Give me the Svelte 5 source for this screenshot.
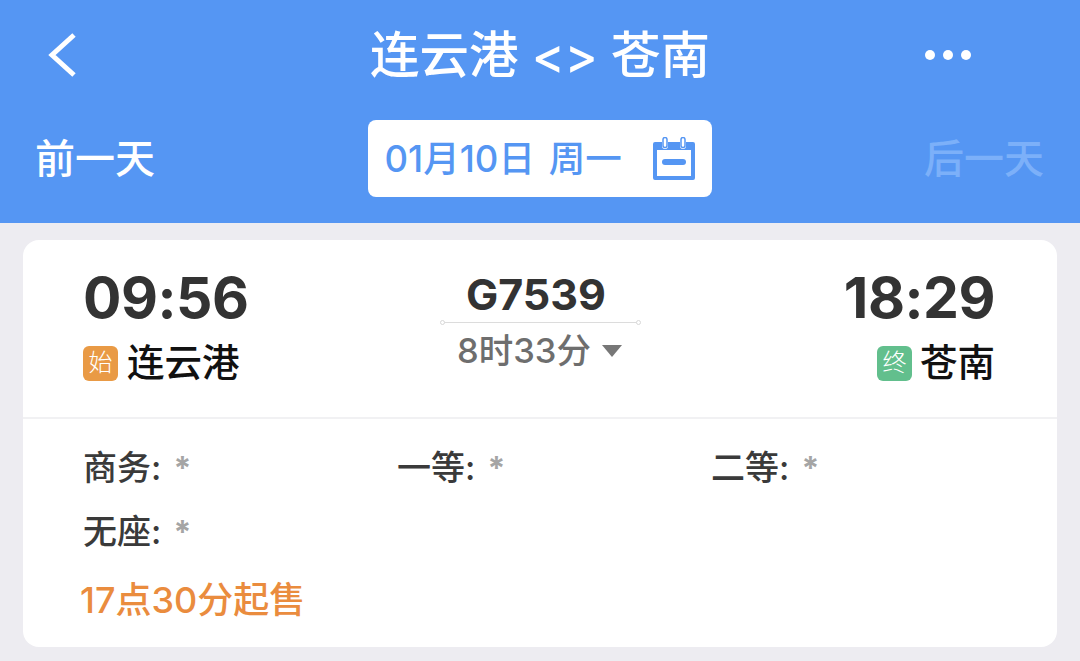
<script>
	const seats = [
		{ label: '商务', value: '*' },
		{ label: '一等', value: '*' },
		{ label: '二等', value: '*' },
		{ label: '无座', value: '*' }
	];
</script>

<div class="page">
	<header class="header">
		<div class="title-row">
			<svg class="back" width="32" height="44" viewBox="0 0 32 44" aria-hidden="true">
				<path d="M26 2 L4 22 L26 42" fill="none" stroke="#fff" stroke-width="5" />
			</svg>
			<h1 class="title">连云港 &lt;&gt; 苍南</h1>
			<div class="dots"><i></i><i></i><i></i></div>
		</div>
		<div class="date-row">
			<span class="day-link">前一天</span>
			<div class="date-pill">
				<span class="date-text">01月10日 周一</span>
				<svg width="44" height="44" viewBox="0 0 44 44" aria-hidden="true">
					<path d="M3 5 H10 V9 a3 3 0 0 0 6 0 V5 H28 V9 a3 3 0 0 0 6 0 V5 H41 a2 2 0 0 1 2 2 V41 a2 2 0 0 1 -2 2 H3 a2 2 0 0 1 -2 -2 V7 a2 2 0 0 1 2 -2 Z M5 13 V39 H39 V13 Z" fill="#5596f3" fill-rule="evenodd" />
					<rect x="11" y="0.5" width="4" height="10" rx="2" fill="#fff" stroke="#5596f3" stroke-width="1.5" />
					<rect x="29" y="0.5" width="4" height="10" rx="2" fill="#fff" stroke="#5596f3" stroke-width="1.5" />
					<rect x="10" y="22" width="24" height="6" rx="3" fill="#5596f3" />
				</svg>
			</div>
			<span class="day-link disabled">后一天</span>
		</div>
	</header>

	<section class="card">
		<div class="trip">
			<div class="end">
				<div class="time">09:56</div>
				<div class="station">
					<span class="tag start">始</span>
					<span>连云港</span>
				</div>
			</div>
			<div class="middle">
				<div class="train">G7539</div>
				<div class="line"></div>
				<div class="duration">8时33分<span class="caret"></span></div>
			</div>
			<div class="end right">
				<div class="time">18:29</div>
				<div class="station">
					<span class="tag finish">终</span>
					<span>苍南</span>
				</div>
			</div>
		</div>
		<div class="details">
			<div class="seats">
				{#each seats as seat}
					<div class="seat">{seat.label}: <span class="star">{seat.value}</span></div>
				{/each}
			</div>
			<div class="sale">17点30分起售</div>
		</div>
	</section>
</div>

<style>
	:global(body) {
		margin: 0;
		background: #edecf1;
		font-family: Inter, "Noto Sans CJK SC", sans-serif;
	}

	.page {
		width: 1080px;
		height: 661px;
		overflow: hidden;
	}

	.header {
		height: 223px;
		box-sizing: border-box;
		background: #5596f3;
		color: #fff;
		padding: 24px 36px 0;
	}

	.title-row {
		display: grid;
		grid-template-columns: 1fr auto 1fr;
		align-items: center;
		height: 62px;
		padding: 0 12px;
	}

	.title {
		margin: 0;
		font-size: 49.5px;
		font-weight: 500;
		line-height: 62px;
		white-space: nowrap;
	}

	.dots {
		display: flex;
		justify-content: flex-end;
		gap: 8px;
		padding-right: 61px;
	}

	.dots i {
		width: 10px;
		height: 10px;
		border-radius: 50%;
		background: #fff;
	}

	.date-row {
		display: flex;
		align-items: center;
		justify-content: space-between;
		margin-top: 34px;
	}

	.day-link {
		margin-left: -1px;
		font-size: 40px;
		font-weight: 500;
		line-height: 77px;
	}

	.day-link.disabled {
		margin-left: 0;
		color: #7cb0f9;
	}

	.date-pill {
		display: flex;
		align-items: center;
		justify-content: space-between;
		box-sizing: border-box;
		width: 344px;
		height: 77px;
		padding: 0 16px 0 17px;
		background: #fff;
		border-radius: 8px;
		color: #5596f3;
		font-size: 36.5px;
		font-weight: 500;
		white-space: nowrap;
	}

	.date-text {
		padding-bottom: 5px;
		word-spacing: 4px;
	}

	.card {
		box-sizing: border-box;
		width: 1034px;
		height: 407px;
		margin: 17px 0 0 23px;
		background: #fff;
		border-radius: 16px;
	}

	.trip {
		display: grid;
		grid-template-columns: 1fr auto 1fr;
		height: 179px;
		box-sizing: border-box;
		padding: 25px 62px 0 60px;
		border-bottom: 2px solid #f1f1f3;
	}

	.time {
		font-size: 57px;
		font-weight: 700;
		line-height: 66px;
		letter-spacing: -0.5px;
		color: #333;
	}

	.station {
		display: flex;
		align-items: center;
		gap: 9px;
		margin-top: 7px;
		font-size: 37.5px;
		font-weight: 500;
		line-height: 50px;
		color: #111;
	}

	.end.right {
		display: flex;
		flex-direction: column;
		align-items: flex-end;
	}

	.end.right .station {
		gap: 8px;
	}

	.tag {
		display: flex;
		align-items: center;
		justify-content: center;
		width: 35px;
		height: 35px;
		border-radius: 6px;
		color: #fff;
		font-size: 24px;
		font-weight: 300;
	}

	.tag.start {
		background: #e99a45;
	}

	.tag.finish {
		background: #62bf8d;
	}

	.middle {
		display: flex;
		flex-direction: column;
		align-items: center;
		width: 202px;
		margin-top: 1px;
	}

	.train {
		padding-right: 6px;
		font-size: 43px;
		font-weight: 700;
		line-height: 56px;
		color: #333;
	}

	.line {
		position: relative;
		left: 1px;
		width: 195px;
		height: 1px;
		background: #dcdcdc;
	}

	.line::before,
	.line::after {
		content: "";
		position: absolute;
		top: -2px;
		width: 3px;
		height: 3px;
		border: 1px solid #d8d8d8;
		border-radius: 50%;
		background: #fff;
	}

	.line::before {
		left: -3px;
	}

	.line::after {
		right: -3px;
	}

	.duration {
		display: flex;
		align-items: center;
		padding-left: 1px;
		font-size: 34.5px;
		font-weight: 500;
		line-height: 56px;
		color: #6e6e6e;
	}

	.caret {
		width: 0;
		height: 0;
		margin-left: 11px;
		border-left: 10px solid transparent;
		border-right: 10px solid transparent;
		border-top: 12px solid #777;
	}

	.details {
		padding: 25px 62px 0 60px;
	}

	.seats {
		display: grid;
		grid-template-columns: repeat(3, 314px);
		row-gap: 16px;
	}

	.seat {
		height: 48px;
		font-size: 34px;
		font-weight: 500;
		line-height: 48px;
		word-spacing: 3px;
		color: #3a3a3a;
	}

	.star {
		font-size: 32px;
		font-weight: 700;
		color: #a5a5a5;
	}

	.sale {
		margin: 20px 0 0 -3px;
		font-size: 36px;
		font-weight: 500;
		line-height: 48px;
		color: #ea8c3e;
	}
</style>
